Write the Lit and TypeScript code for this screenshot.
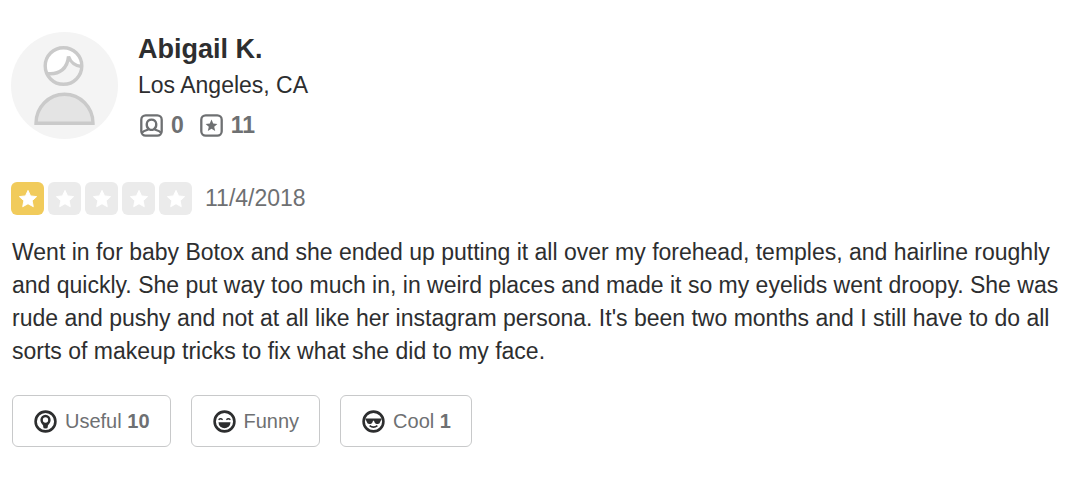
import { LitElement, html, css, svg } from "lit";
import { customElement, property } from "lit/decorators.js";

const STAR =
  "M12 2.6l2.8 6 6.6.8-4.9 4.5 1.3 6.5L12 17.2l-5.8 3.2 1.3-6.5-4.9-4.5 6.6-.8z";

const icons = {
  friends: svg`
    <rect x="1.3" y="1.3" width="20.4" height="20.4" rx="4.4" fill="none" stroke="currentColor" stroke-width="2.3"/>
    <path d="M9 15.200C5.400 12.500 6 5.600 11.500 5.600S17.600 12.500 14 15.200" fill="none" stroke="currentColor" stroke-width="2.300"/>
    <path d="M2 18.600c2-2 4-2.200 7.200-3.400q2.300 1.400 4.600 0c3.200 1.200 5.200 1.400 7.200 3.400" fill="none" stroke="currentColor" stroke-width="2.200"/>`,
  reviews: svg`
    <rect x="1.3" y="1.3" width="20.4" height="20.4" rx="4.4" fill="none" stroke="currentColor" stroke-width="2.3"/>
    <path d="M11.5 5.6l1.7 3.9 4.2.4-3.2 2.8 1 4.2-3.7-2.2-3.7 2.2 1-4.2-3.2-2.8 4.2-.4z" fill="currentColor"/>`,
  useful: svg`
    <circle cx="11.5" cy="11.5" r="9.9" fill="none" stroke="currentColor" stroke-width="2.6"/>
    <path d="M7.2 12.2h8.600l-2 3.500v1.200a2.300 1.700 0 0 1-4.600 0v-1.200z" fill="currentColor"/>
    <circle cx="11.5" cy="10" r="3.9" fill="#fff" stroke="currentColor" stroke-width="2.5"/>`,
  funny: svg`
    <circle cx="11.5" cy="11.5" r="9.9" fill="none" stroke="currentColor" stroke-width="2.6"/>
    <path d="M5.6 9.8q2-2 4 0M13.4 9.8q2-2 4 0" fill="none" stroke="currentColor" stroke-width="1.4"/>
    <path d="M5.5 12.3h12a6 5.9 0 0 1-12 0z" fill="currentColor"/>`,
  cool: svg`
    <circle cx="11.5" cy="11.5" r="9.9" fill="none" stroke="currentColor" stroke-width="2.6"/>
    <path d="M3.2 8.5h16.6l-1.5 3.2q-.6 2.3-2.5 2.3h-1.1q-1.6 0-2.2-1.7l-.5-1.5h-1l-.5 1.5q-.6 1.7-2.2 1.7H7.2q-1.9 0-2.5-2.300z" fill="currentColor"/>
    <path d="M7.600 15.600q3.900 3 7.800 0" fill="none" stroke="currentColor" stroke-width="1.700"/>`,
};

type IconName = keyof typeof icons;

@customElement("review-icon")
class ReviewIcon extends LitElement {
  @property() name: IconName = "useful";

  static styles = css`
    :host {
      display: block;
      flex: none;
      width: 23px;
      height: 23px;
    }
    .glyph {
      display: block;
      width: 100%;
      height: 100%;
    }
  `;

  render() {
    return html`<svg class="glyph" viewBox="0 0 23 23" aria-hidden="true">${icons[this.name]}</svg>`;
  }
}

@customElement("star-rating")
class StarRating extends LitElement {
  @property({ type: Number }) value = 0;

  static styles = css`
    :host {
      display: block;
    }
    .stars {
      display: flex;
      gap: 4px;
    }
    .star {
      display: grid;
      place-items: center;
      width: 33px;
      height: 33px;
      border-radius: 6px;
      background: #ebebeb;
    }
    .on {
      background: #f1cb5b;
    }
    .shape {
      width: 22px;
      height: 22px;
      fill: #fff;
      stroke: #fff;
      stroke-linejoin: round;
    }
  `;

  render() {
    return html`<div class="stars" role="img" aria-label="${this.value} star rating">
      ${[1, 2, 3, 4, 5].map(
        (n) => html`<span class="star ${n <= this.value ? "on" : ""}">
          <svg class="shape" viewBox="0 0 24 24"><path d=${STAR} /></svg>
        </span>`,
      )}
    </div>`;
  }
}

@customElement("app-root")
class AppRoot extends LitElement {
  static styles = css`
    :host {
      display: block;
      font-family: "Liberation Sans", Arial, sans-serif;
      font-size: 23px;
      color: #2d2e2f;
      background: #fff;
    }
    .review {
      padding: 32px 11px;
    }
    .author {
      display: flex;
      gap: 20px;
    }
    .avatar {
      flex: none;
      width: 107px;
      height: 107px;
    }
    .name {
      margin: 0;
      font-size: 27px;
      line-height: 34px;
    }
    .place {
      margin: 0;
      line-height: 38px;
    }
    .stats {
      display: flex;
      gap: 16px;
      padding: 9px 2px 0;
      line-height: 24px;
      font-weight: bold;
      color: #6e7072;
    }
    .stat {
      display: flex;
      align-items: center;
      gap: 8px;
    }
    .rating {
      display: flex;
      align-items: center;
      gap: 13px;
      margin-top: 43px;
      color: #6e7072;
    }
    .body {
      margin: 21px 1px 0;
      line-height: 33px;
    }
    .votes {
      display: flex;
      gap: 20px;
      margin: 27px 1px 0;
    }
    .vote {
      display: flex;
      align-items: center;
      gap: 8px;
      height: 52px;
      padding: 0 20px 0 21px;
      border: 1px solid #c8c9ca;
      border-radius: 6px;
      background: #fff;
      font: inherit;
      font-size: 20px;
      color: #6e7072;
      cursor: pointer;
    }
    .vote-icon {
      color: #2d2e2f;
    }
  `;

  private votes: { icon: IconName; label: string; count?: number }[] = [
    { icon: "useful", label: "Useful", count: 10 },
    { icon: "funny", label: "Funny" },
    { icon: "cool", label: "Cool", count: 1 },
  ];

  render() {
    return html`<article class="review">
      <header class="author">
        <svg class="avatar" viewBox="0 0 107 107" role="img" aria-label="Profile picture">
          <circle cx="53.5" cy="53.5" r="53.5" fill="#f4f4f4" />
          <path d="M36 41.5A18.3 18.3 0 1 1 70.5 34.5C65 34 59.5 30.5 57.5 24.5C56.5 36 49 43 36 41.5z" fill="#fff" />
          <path d="M36 41.5C49 43 56.5 36 57.5 24.5C59.5 30.5 65 34 70.5 34.5" fill="none" stroke="#cacaca" stroke-width="3.4" />
          <circle cx="52.5" cy="34" r="18.3" fill="none" stroke="#cacaca" stroke-width="3.4" />
          <path d="M25 91.2A28.5 29 0 0 1 82 91.2z" fill="#e4e4e4" stroke="#cacaca" stroke-width="3.4" />
        </svg>
        <div>
          <h2 class="name">Abigail K.</h2>
          <p class="place">Los Angeles, CA</p>
          <div class="stats">
            <span class="stat" title="Friends"><review-icon name="friends"></review-icon>0</span>
            <span class="stat" title="Reviews"><review-icon name="reviews"></review-icon>11</span>
          </div>
        </div>
      </header>
      <div class="rating">
        <star-rating value="1"></star-rating>
        <time datetime="2018-11-04">11/4/2018</time>
      </div>
      <p class="body">
        Went in for baby Botox and she ended up putting it all over my forehead, temples, and hairline
        roughly and quickly. She put way too much in, in weird places and made it so my eyelids went
        droopy. She was rude and pushy and not at all like her instagram persona. It's been two months
        and I still have to do all sorts of makeup tricks to fix what she did to my face.
      </p>
      <div class="votes">
        ${this.votes.map(
          (v) => html`<button class="vote" type="button">
            <review-icon class="vote-icon" name=${v.icon}></review-icon>
            <span>${v.label}${v.count ? html` <b>${v.count}</b>` : ""}</span>
          </button>`,
        )}
      </div>
    </article>`;
  }
}
